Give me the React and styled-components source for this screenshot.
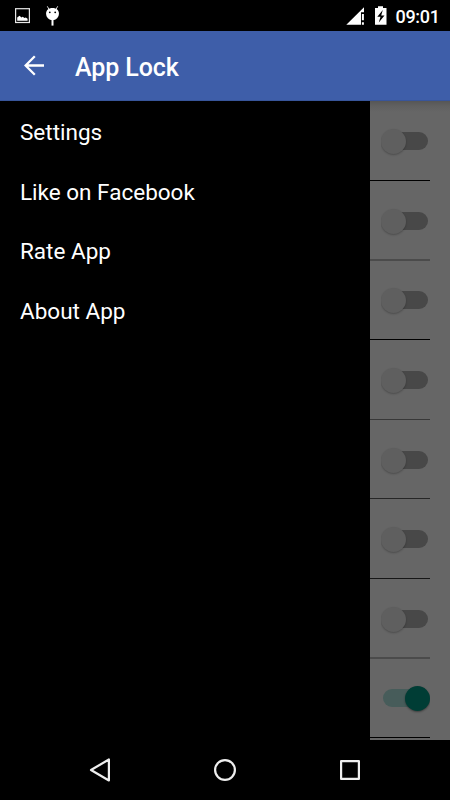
import React from "react";
import styled, { createGlobalStyle } from "styled-components";

const GlobalStyle = createGlobalStyle`
  *, *::before, *::after { box-sizing: border-box; }
  body { margin: 0; background: #000; font-family: Roboto, sans-serif; }
`;

const Phone = styled.div`
  width: 450px;
  height: 800px;
  display: flex;
  flex-direction: column;
  overflow: hidden;
  background: #000;
`;

const StatusBar = styled.header`
  height: 31px;
  flex: none;
  display: flex;
  justify-content: space-between;
  background: #000;
`;

const StatusGroup = styled.div`
  display: flex;
  svg { display: block; }
`;

const Clock = styled.span`
  width: 60px;
  padding-left: 5.5px;
  font-size: 18px;
  letter-spacing: -0.3px;
  line-height: 33px;
  font-weight: 500;
  color: #fff;
  white-space: nowrap;
`;

const AppBar = styled.div`
  height: 70px;
  flex: none;
  display: flex;
  align-items: center;
  background: #3e5ea9;
  border-bottom: 1px solid #38559a;
`;

const BackButton = styled.button`
  width: 75px;
  height: 69px;
  padding: 0 0 0 24px;
  border: 0;
  background: none;
  display: flex;
  align-items: center;
`;

const Title = styled.h1`
  margin: 4px 0 0;
  font-size: 25px;
  letter-spacing: -0.1px;
  line-height: 30px;
  font-weight: 500;
  color: #fff;
`;

const Content = styled.main`
  height: 639px;
  flex: none;
  display: flex;
`;

const Drawer = styled.nav`
  width: 370px;
  background: #000;
  padding-top: 1px;
`;

const DrawerItem = styled.a`
  display: block;
  height: 59.7px;
  padding-left: 20px;
  font-size: 22.5px;
  line-height: 60px;
  color: #fff;
`;

const AppList = styled.section`
  width: 80px;
  padding-right: 20px;
  overflow: hidden;
  background: linear-gradient(#565656, #606060 5px, #666 11px) #666;
`;

const AppRow = styled.div`
  height: ${(p) => p.$height}px;
  display: flex;
  align-items: flex-start;
  padding: ${(p) => p.$top}px 0 0 11px;
  border-bottom: ${(p) => (p.$soft ? 2 : 1)}px solid ${(p) => p.$line};
`;

const Switch = styled.div`
  width: 49px;
  height: 32px;
  display: flex;
  align-items: center;
  padding-left: 2px;
  overflow: hidden;
`;

const Track = styled.div`
  width: 44.5px;
  height: 17.5px;
  border-radius: 9px;
  background: ${(p) => (p.$on ? "#475c5a" : "#484848")};
  display: flex;
  align-items: center;
`;

const Knob = styled.div`
  width: 25px;
  height: 25px;
  flex: none;
  border-radius: 50%;
  margin-left: ${(p) => (p.$on ? 22 : -2.5)}px;
  background: ${(p) => (p.$on ? "#003d35" : "#5f5f5f")};
  box-shadow: 0 1px 2px rgba(0, 0, 0, ${(p) => (p.$on ? 0.4 : 0.25)});
`;

const NavBar = styled.footer`
  height: 60px;
  flex: none;
  display: grid;
  grid-template-columns: repeat(3, 125px);
  justify-content: center;
  justify-items: center;
  align-items: center;
  svg { display: block; }
`;

const menu = ["Settings", "Like on Facebook", "Rate App", "About App"];

const rows = [
  { height: 80, top: 24, line: "#000" },
  { height: 80, top: 24, line: "#4b4b4b", soft: true },
  { height: 79, top: 23, line: "#000" },
  { height: 80, top: 24, line: "#383838" },
  { height: 79, top: 24, line: "#262626" },
  { height: 80, top: 24, line: "#161616" },
  { height: 80, top: 24, line: "#4b4b4b", soft: true },
  { height: 79, top: 23, line: "#000", on: true },
];

export default function App() {
  return (
    <>
      <GlobalStyle />
      <Phone>
        <StatusBar>
          <StatusGroup>
            <svg width="70" height="31" viewBox="0 0 70 31">
              <rect x="15.600" y="8.700" width="13.800" height="13.800" fill="none" stroke="#e8e8e8" strokeWidth="1.200" />
              <path d="M17.200 20.700V17.500l2.300-1.700 2 1.800 1.200-.8 1.800 1.100 1.300-.5 1.800 1.300v2z" fill="#fff" />
              <path d="m47.300 6.300 1.700 3M57.700 6.300l-1.700 3" stroke="#ddd" strokeWidth="1" />
              <path d="M52.500 8c4 0 6.400 2.200 6.400 5.500 0 4-2.800 6.600-6.400 6.600s-6.400-2.600-6.400-6.600C46.100 10.200 48.500 8 52.500 8z" fill="#fff" />
              <path d="M52.500 20v5.600" stroke="#fff" strokeWidth="2" />
              <circle cx="49.800" cy="12.300" r=".9" fill="#000" />
              <circle cx="55.200" cy="12.300" r=".9" fill="#000" />
            </svg>
          </StatusGroup>
          <StatusGroup>
            <svg width="50" height="31" viewBox="340 0 50 31">
              <path d="M346.300 24.700 364 7.300v5h-3v12.400z" fill="#fff" />
              <path d="M362.900 14v6.300M362.900 22.200v2.500" stroke="#fff" strokeWidth="2" />
              <path d="M375 8h3V6.300h5V8h3.500v16.700H375z" fill="#fff" />
              <path d="m382.800 10-5.500 6.800h3.200l-1.700 5.700 5.700-7.100h-3.300z" fill="#000" />
            </svg>
            <Clock>09:01</Clock>
          </StatusGroup>
        </StatusBar>
        <AppBar>
          <BackButton aria-label="Back">
            <svg width="21" height="21" viewBox="0 0 21 21" fill="none" stroke="#fff" strokeWidth="2.300">
              <path d="M20 10.500H2M10.800 1.300 1.600 10.500l9.200 9.200" />
            </svg>
          </BackButton>
          <Title>App Lock</Title>
        </AppBar>
        <Content>
          <Drawer>
            {menu.map((label) => (
              <DrawerItem key={label}>{label}</DrawerItem>
            ))}
          </Drawer>
          <AppList>
            {rows.map((row, i) => (
              <AppRow key={i} $height={row.height} $top={row.top} $line={row.line} $soft={row.soft}>
                <Switch>
                  <Track $on={row.on}>
                    <Knob $on={row.on} />
                  </Track>
                </Switch>
              </AppRow>
            ))}
          </AppList>
        </Content>
        <NavBar>
          <svg width="30" height="30" viewBox="85 755 30 30" fill="none" stroke="#eee" strokeWidth="2.200" strokeLinejoin="round">
            <path d="M108.900 759.500v21L91 770z" />
          </svg>
          <svg width="30" height="30" viewBox="210 755 30 30" fill="none" stroke="#eee" strokeWidth="2.200">
            <circle cx="225" cy="770" r="9.900" />
          </svg>
          <svg width="30" height="30" viewBox="335 755 30 30" fill="none" stroke="#eee" strokeWidth="2.200" strokeLinejoin="round">
            <rect x="341.100" y="761.100" width="17.800" height="17.800" />
          </svg>
        </NavBar>
      </Phone>
    </>
  );
}
